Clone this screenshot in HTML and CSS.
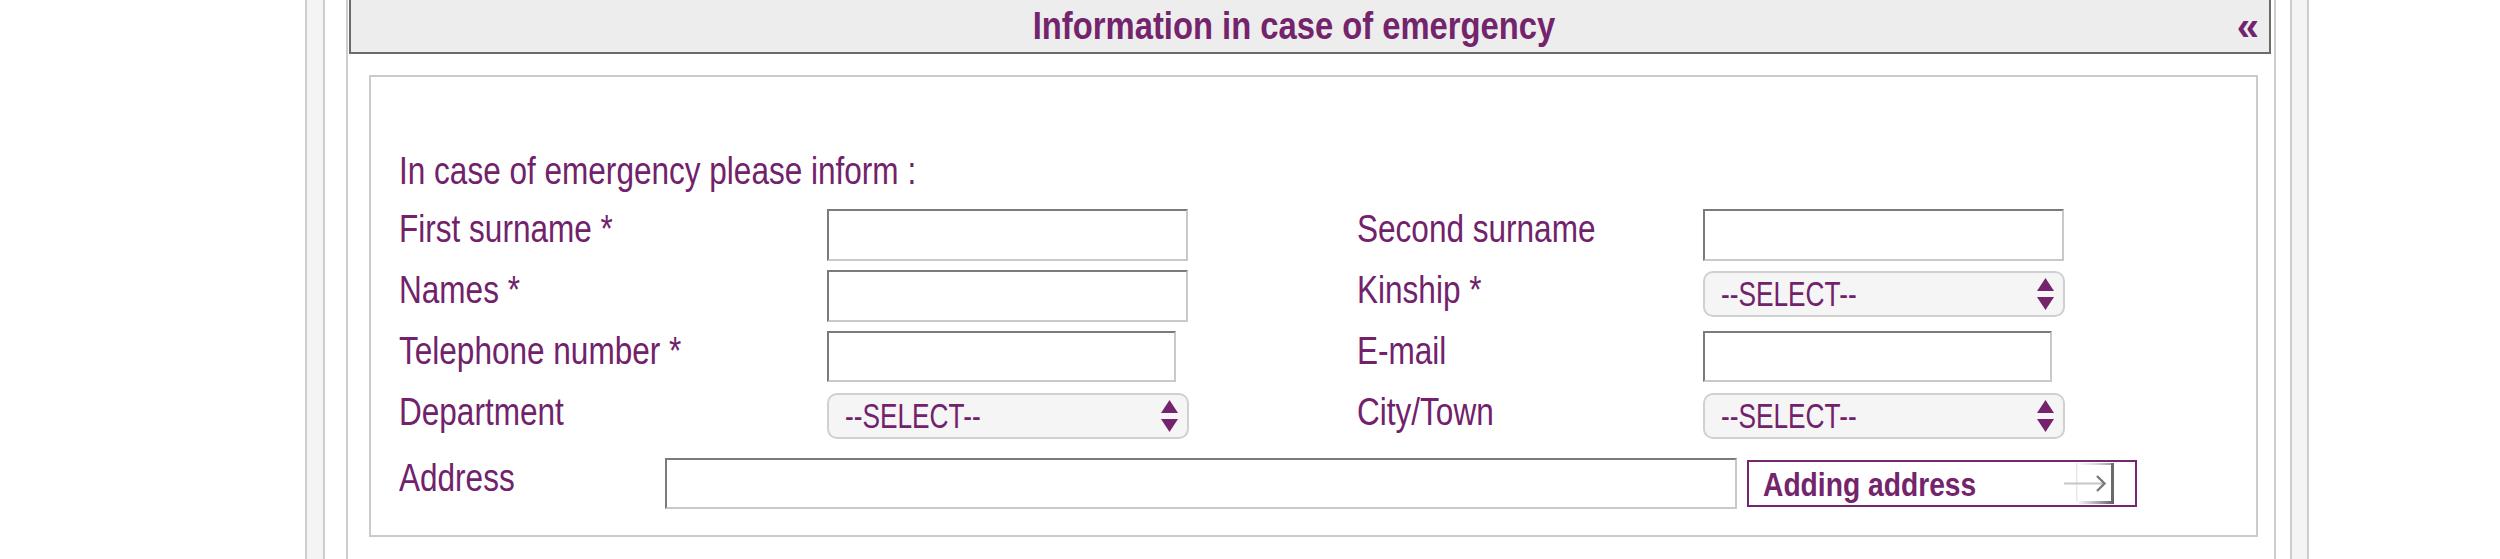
FILE: index.html
```html
<!DOCTYPE html>
<html lang="en">
<head>
<meta charset="utf-8">
<title>Information in case of emergency</title>
<link rel="stylesheet" href="styles.css">
</head>
<body>
<div class="page">
  <div class="rail"></div>
  <div class="main">
    <div class="header">
      <h2 class="title"><span class="narrow narrow-center">Information in case of emergency</span></h2>
      <span class="toggle">«</span>
    </div>
    <div class="box">
      <p class="intro"><span class="narrow">In case of emergency please inform :</span></p>
      <div class="grid">
        <label class="label"><span class="narrow">First surname *</span></label>
        <input class="field" type="text">
        <label class="label"><span class="narrow">Second surname</span></label>
        <input class="field" type="text">

        <label class="label"><span class="narrow">Names *</span></label>
        <input class="field" type="text">
        <label class="label"><span class="narrow">Kinship *</span></label>
        <div class="select">
          <span class="narrow select-text">--SELECT--</span>
          <svg class="arrows" width="17" height="33" viewBox="0 0 17 33"><path d="M8.5 0 L17 13 H0 Z" fill="#74246c"/><path d="M0 19 H17 L8.5 32 Z" fill="#74246c"/></svg>
        </div>

        <label class="label"><span class="narrow">Telephone number *</span></label>
        <input class="field field-short" type="text">
        <label class="label"><span class="narrow">E-mail</span></label>
        <input class="field field-short" type="text">

        <label class="label"><span class="narrow">Department</span></label>
        <div class="select">
          <span class="narrow select-text">--SELECT--</span>
          <svg class="arrows" width="17" height="33" viewBox="0 0 17 33"><path d="M8.5 0 L17 13 H0 Z" fill="#74246c"/><path d="M0 19 H17 L8.5 32 Z" fill="#74246c"/></svg>
        </div>
        <label class="label"><span class="narrow">City/Town</span></label>
        <div class="select">
          <span class="narrow select-text">--SELECT--</span>
          <svg class="arrows" width="17" height="33" viewBox="0 0 17 33"><path d="M8.5 0 L17 13 H0 Z" fill="#74246c"/><path d="M0 19 H17 L8.5 32 Z" fill="#74246c"/></svg>
        </div>
      </div>
      <div class="address-row">
        <label class="label label-address"><span class="narrow">Address</span></label>
        <input class="field field-address" type="text">
        <button class="add-btn" type="button">
          <span class="narrow">Adding address</span>
          <svg class="add-icon" width="52" height="43" viewBox="0 0 52 43">
            <defs>
              <linearGradient id="fadeTop" x1="0" x2="1" y1="0" y2="0">
                <stop offset="0" stop-color="#ffffff"/>
                <stop offset="0.5" stop-color="#dddddd"/>
                <stop offset="1" stop-color="#9a9a9a"/>
              </linearGradient>
              <linearGradient id="fadeBottom" x1="0" x2="1" y1="0" y2="0">
                <stop offset="0" stop-color="#ffffff"/>
                <stop offset="0.45" stop-color="#bdbdbd"/>
                <stop offset="1" stop-color="#5e5e5e"/>
              </linearGradient>
            </defs>
            <rect x="12" y="1" width="37" height="2" fill="url(#fadeTop)"/>
            <rect x="12" y="1" width="1.5" height="41" fill="#e8e8e8"/>
            <rect x="47" y="1" width="3" height="41" fill="#6a6a6a"/>
            <rect x="12" y="39" width="38" height="3" fill="url(#fadeBottom)"/>
            <path d="M0 21.5 H40" stroke="#c6c6c6" stroke-width="2"/>
            <path d="M33 14 L40.5 21.5 L33 29" fill="none" stroke="#7a7a7a" stroke-width="2.4"/>
          </svg>
        </button>
      </div>
    </div>
  </div>
  <div class="rail rail-right"></div>
</div>
</body>
</html>
```

FILE: styles.css
```css
* {
  box-sizing: border-box;
}

html, body {
  margin: 0;
  padding: 0;
  background: #ffffff;
}

body {
  width: 2500px;
  height: 559px;
  overflow: hidden;
  font-family: "Liberation Sans", Arial, sans-serif;
  color: #71226a;
}

/* condensed look of the original humanist font */
.narrow {
  display: inline-block;
  white-space: nowrap;
  transform: scaleX(0.83);
  transform-origin: left center;
}

.narrow-center {
  transform: scaleX(0.84);
  transform-origin: center center;
}

.page {
  display: flex;
  height: 559px;
  padding-left: 305px;
}

.rail {
  width: 20px;
  height: 100%;
  background: #f4f4f4;
  border-left: 2px solid #cdcdcd;
  border-right: 2px solid #cdcdcd;
  flex: none;
}

.rail-right {
  margin-left: 14px;
  width: 19px;
}

.main {
  margin-left: 21px;
  width: 1930px;
  height: 100%;
  border-left: 2px solid #cdcdcd;
  border-right: 2px solid #cdcdcd;
  padding: 0 3px 0 1px;
  flex: none;
}

.header {
  display: flex;
  align-items: center;
  height: 54px;
  background: #ededed;
  border-left: 2px solid #6a6a6a;
  border-right: 2px solid #6a6a6a;
  border-bottom: 2px solid #6a6a6a;
  padding-right: 10px;
}

.title {
  flex: 1;
  margin: 0;
  text-align: center;
  font-size: 39px;
  line-height: 52px;
  font-weight: bold;
  color: #74246c;
}

.toggle {
  font-size: 40px;
  line-height: 52px;
  font-weight: bold;
  color: #74246c;
}

.box {
  margin: 21px 13px 0 20px;
  height: 462px;
  border: 2px solid #cbcbcb;
  padding: 74px 0 0 28px;
}

.intro {
  margin: 0 0 18px 0;
  font-size: 38px;
  line-height: 40px;
  color: #71226a;
}

.grid {
  display: grid;
  grid-template-columns: 428px 530px 346px 361px;
  grid-auto-rows: 52px;
  row-gap: 9px;
}

.label {
  font-size: 38px;
  line-height: 40px;
  color: #71226a;
  align-self: start;
  white-space: nowrap;
}

.field {
  width: 361px;
  height: 52px;
  margin: 0;
  padding: 0 8px;
  background: #ffffff;
  border-style: solid;
  border-width: 2px;
  border-color: #7b7b7b #c9c9c9 #c9c9c9 #7b7b7b;
  border-radius: 0;
  outline: none;
  font-family: inherit;
  font-size: 30px;
}

.field-short {
  width: 349px;
  height: 51px;
}

.select {
  display: flex;
  align-items: center;
  justify-content: space-between;
  width: 362px;
  height: 46px;
  align-self: start;
  margin-top: 1px;
  padding: 0 9px 0 16px;
  background: #f5f5f5;
  border: 2px solid #d0d0d0;
  border-radius: 10px;
  cursor: default;
}

.select-text {
  font-size: 35px;
  line-height: 42px;
  color: #71226a;
  transform: scaleX(0.75);
}

.arrows {
  flex: none;
}

.address-row {
  display: flex;
  align-items: flex-start;
  margin-top: 14px;
}

.label-address {
  width: 266px;
  flex: none;
}

.field-address {
  width: 1072px;
  height: 51px;
}

.add-btn {
  display: flex;
  align-items: center;
  justify-content: space-between;
  margin: 2px 0 0 10px;
  width: 390px;
  height: 47px;
  padding: 0 19px 0 14px;
  background: #ffffff;
  border: 2px solid #76266e;
  border-radius: 0;
  font-family: inherit;
  font-size: 34px;
  font-weight: bold;
  color: #74246c;
  cursor: pointer;
}

.add-btn .narrow {
  line-height: 40px;
}

.add-icon {
  flex: none;
}
```
